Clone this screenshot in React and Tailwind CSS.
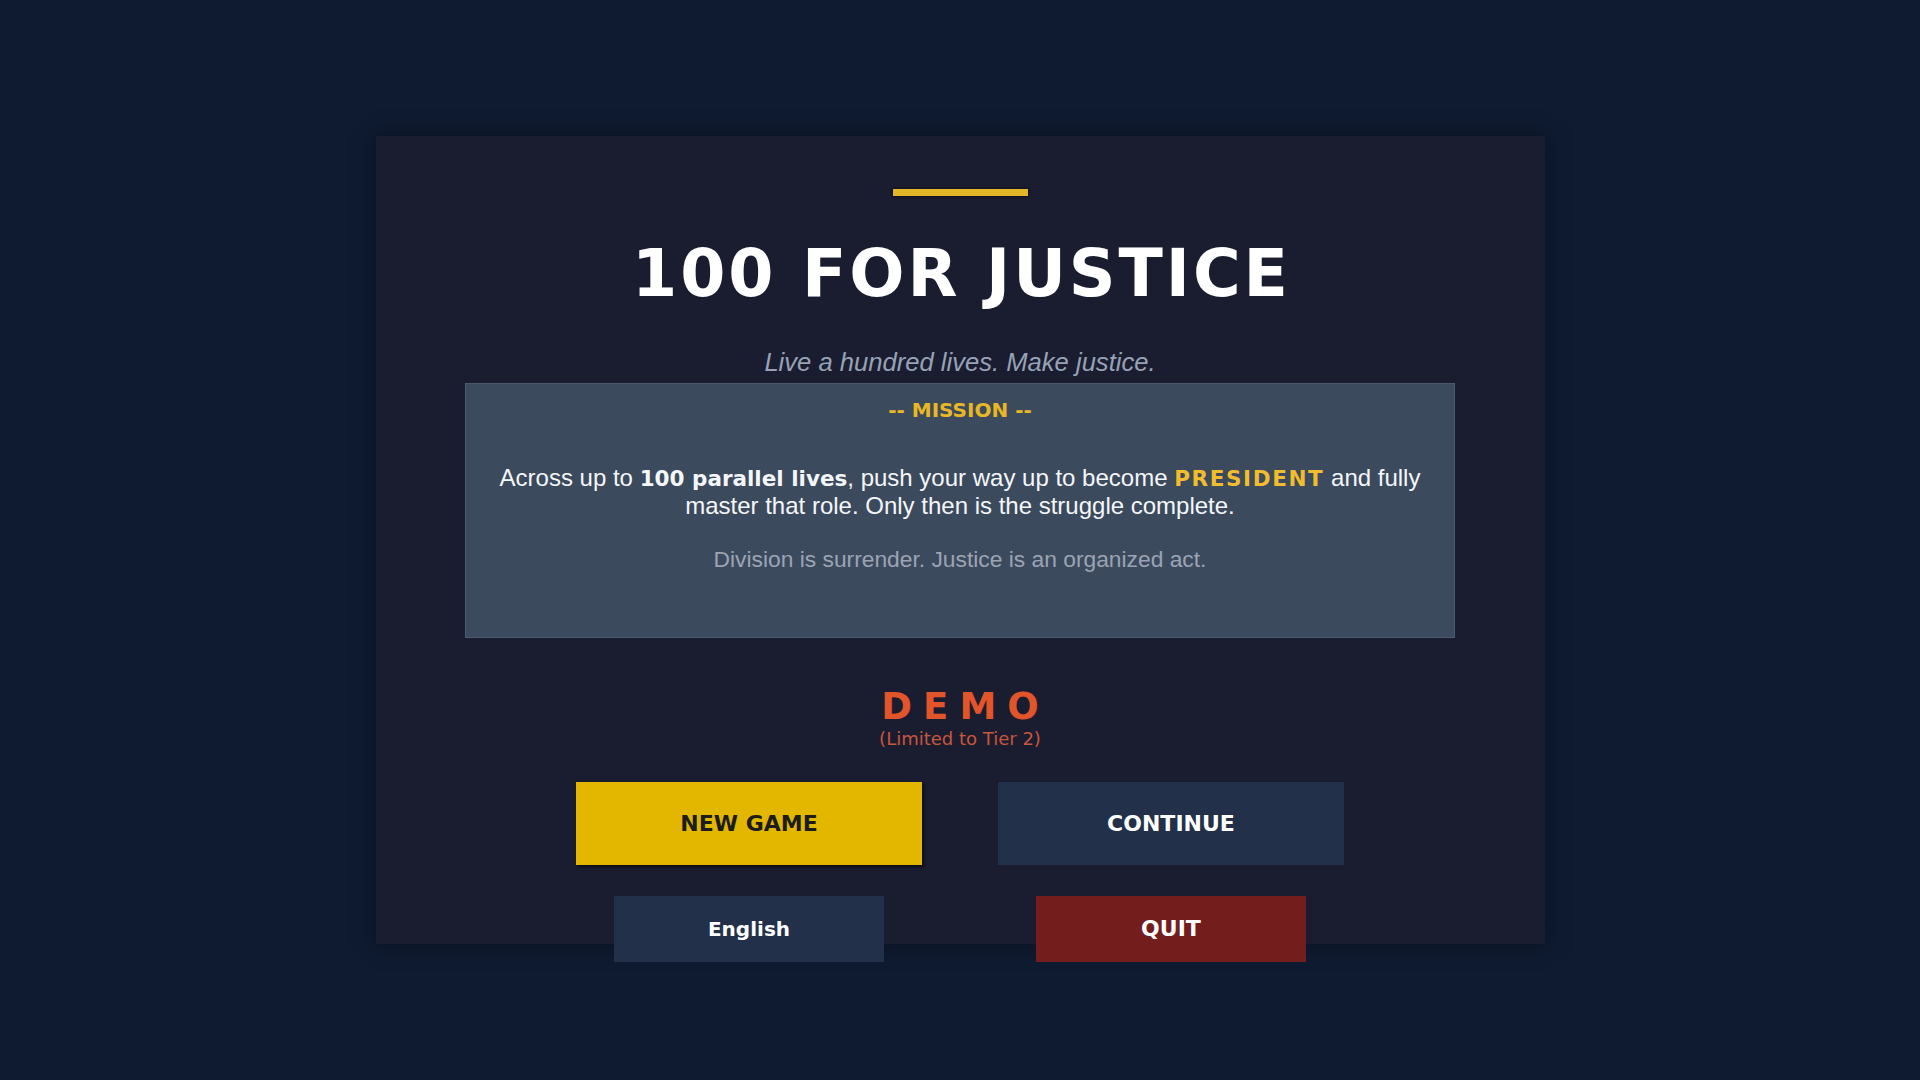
import React from 'react';

const font = "font-['Liberation_Sans',Arial,sans-serif]";
const heavy = "font-['DejaVu_Sans',Verdana,sans-serif] font-bold";

const MissionBox = () => (
  <div className="shrink-0 mt-[7px] w-[990px] h-[255px] bg-[#3c4a5e] border border-[#4b5a6f] px-6 pt-[16px] flex flex-col items-center text-center">
    <div className={`${heavy} text-[20px] leading-none text-[#e8b824]`}>-- MISSION --</div>
    <p className="mt-[44px] text-[24px] leading-[28px] text-[#f4f6f9]">
      Across up to <strong className={`${heavy} text-[21.5px] leading-none`}>100 parallel lives</strong>, push your way up
      to become{' '}
      <strong className={`${heavy} text-[21.5px] leading-none tracking-[0.075em] text-[#f2bd2c]`}>PRESIDENT</strong> and
      fully master that role. Only then is the struggle complete.
    </p>
    <p className="mt-[28px] text-[22.8px] leading-none text-[#9ba4b3]">
      Division is surrender. Justice is an organized act.
    </p>
  </div>
);

const App = () => {
  return (
    <div className={`${font} w-full h-[1080px] bg-[#0f1b31] flex items-center justify-center`}>
      <div className="w-[1169px] h-[808px] bg-[#1a1d30] shadow-[0_0_24px_rgba(0,0,0,0.35)] flex flex-col items-center pt-[53px]">
        <div className="shrink-0 w-[135px] h-[7px] bg-[#e3b62a] shadow-[0_0_3px_rgba(0,0,0,0.8)]" />

        <h1 className={`${heavy} shrink-0 mt-[45px] text-[65px] leading-none tracking-[0.045em] pl-[0.045em] text-white`}>
          100 FOR JUSTICE
        </h1>

        <p className="shrink-0 mt-[44px] text-[25.6px] leading-none italic text-[#97a2b5]">
          Live a hundred lives. Make justice.
        </p>

        <MissionBox />

        <div className={`${heavy} shrink-0 mt-[50px] text-[37px] leading-none tracking-[0.3em] pl-[0.3em] text-[#e2552a]`}>
          DEMO
        </div>
        <div className="shrink-0 mt-[5px] font-['DejaVu_Sans',Verdana,sans-serif] text-[18px] leading-none text-[#c9553b]">
          (Limited to Tier 2)
        </div>

        <div className="shrink-0 mt-[34px] grid grid-cols-[346px_346px] gap-x-[76px] gap-y-[31px]">
          <button className={`${heavy} h-[83px] bg-[#e3b700] text-[#1c1c1c] text-[22px] shadow-[2px_2px_3px_rgba(0,0,0,0.6)]`}>
            NEW GAME
          </button>
          <button className={`${heavy} h-[83px] bg-[#22304a] text-white text-[22px]`}>CONTINUE</button>
          <button className={`${heavy} justify-self-center w-[270px] h-[66px] bg-[#22304a] text-white text-[20px]`}>
            English
          </button>
          <button className={`${heavy} justify-self-center w-[270px] h-[66px] bg-[#741d1d] text-white text-[22px]`}>
            QUIT
          </button>
        </div>
      </div>
    </div>
  );
};

export default App;
